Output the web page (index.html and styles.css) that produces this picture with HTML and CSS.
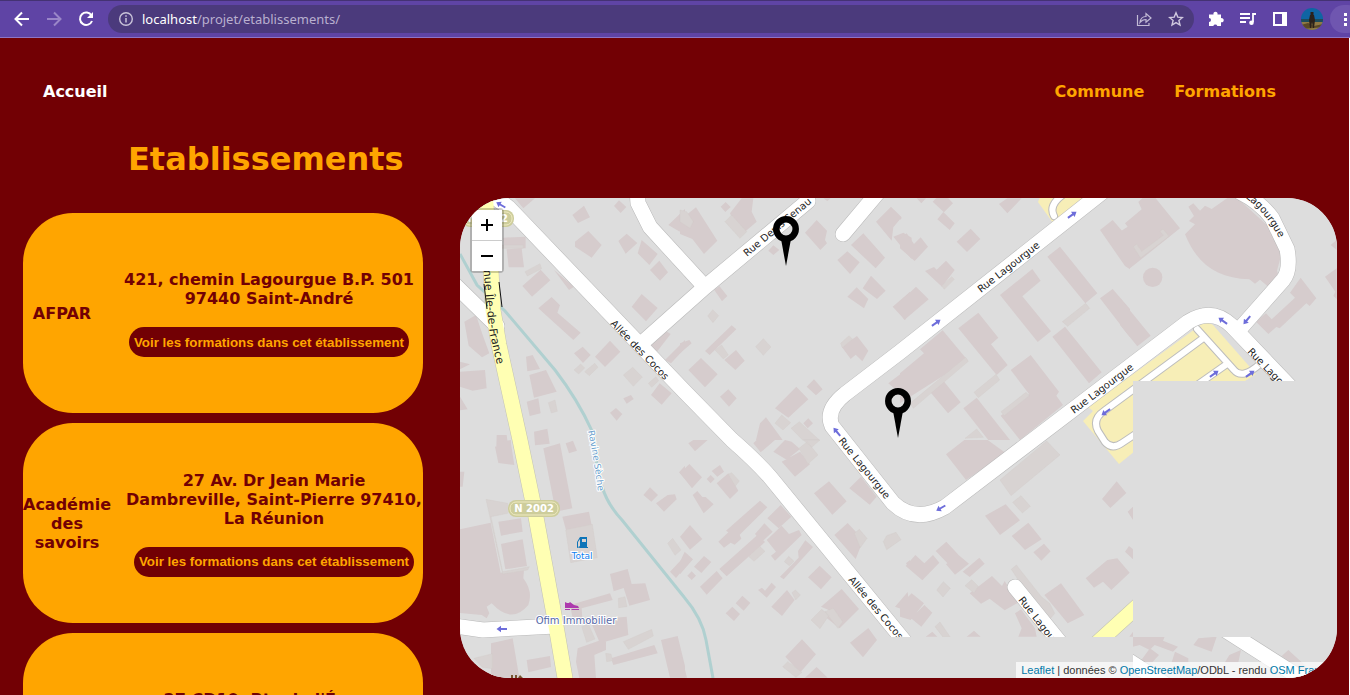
FILE: index.html
```html
<!DOCTYPE html>
<html lang="fr">
<head>
<meta charset="utf-8">
<title>Etablissements</title>
<link rel="stylesheet" href="styles.css">
</head>
<body>
<div class="toolbar">
  <button class="tool" aria-label="Précédent"><svg width="18" height="18" viewBox="0 0 18 18"><path d="M16 9H3M9 2.500 2.500 9 9 15.500" fill="none" stroke="#fff" stroke-width="2"/></svg></button>
  <button class="tool" aria-label="Suivant"><svg width="18" height="18" viewBox="0 0 18 18"><path d="M2 9h13M9 2.500 15.500 9 9 15.500" fill="none" stroke="#9a86c8" stroke-width="2"/></svg></button>
  <button class="tool" aria-label="Actualiser"><svg width="18" height="18" viewBox="0 0 18 18"><path d="M14.500 5.500A6.200 6.200 0 1 0 15 11" fill="none" stroke="#fff" stroke-width="2"/><path d="M16 2v6h-6z" fill="#fff"/></svg></button>
  <div class="address-bar">
    <svg width="16" height="16" viewBox="0 0 16 16"><circle cx="8" cy="8" r="6.300" fill="none" stroke="#c9c3d9" stroke-width="1.400"/><path d="M8 7v4.500M8 4.300v1.500" stroke="#c9c3d9" stroke-width="1.500"/></svg>
    <span class="url"><span class="host">localhost</span>/projet/etablissements/</span>
    <button class="tool" aria-label="Partager"><svg width="16" height="16" viewBox="0 0 16 16"><path d="M1.500 4v10.500H13V12M4 11.500C4.500 7.500 7 5.500 10 5.500V2.500L15 7l-5 4.300V8.500C7.500 8.500 5.500 9.500 4 11.500z" fill="none" stroke="#c3bbd6" stroke-width="1.200"/></svg></button>
    <button class="tool" aria-label="Favori"><svg width="16" height="16" viewBox="0 0 16 16"><path d="m8 1.800 1.800 4.300 4.600.4-3.500 3 1.100 4.500L8 11.600 4 14l1.100-4.500-3.500-3 4.600-.4z" fill="none" stroke="#d0c9df" stroke-width="1.400"/></svg></button>
  </div>
  <button class="tool" aria-label="Extensions"><svg width="18" height="18" viewBox="0 0 18 18"><path d="M2 4.500h4.500a2.100 2.100 0 1 1 4 0H14V8.200a2.100 2.100 0 1 1 0 4V16h-3.700a2.100 2.100 0 0 0-4 0H2v-3.900a2 2 0 0 0 0-4z" fill="#fff"/></svg></button>
  <button class="tool" aria-label="Médias"><svg width="18" height="18" viewBox="0 0 18 18"><path d="M1 4h10M1 8h10M1 12h6M14 12V4h3" fill="none" stroke="#fff" stroke-width="1.800"/><circle cx="12.500" cy="12.800" r="2.300" fill="#fff"/></svg></button>
  <button class="tool" aria-label="Panneau latéral"><svg width="16" height="16" viewBox="0 0 16 16"><path d="M1 1h14v14H1zM3 3v10h7V3z" fill="#fff" fill-rule="evenodd"/></svg></button>
  <button class="tool" aria-label="Profil"><svg width="22" height="22" viewBox="0 0 22 22"><defs><clipPath id="avatar"><circle cx="11" cy="11" r="11"/></clipPath></defs><g clip-path="url(#avatar)"><path fill="#0f65a3" d="M0 0h22v22H0z"/><path fill="#1d4c5c" d="M0 11h22v3H0z"/><path fill="#8f7a45" d="M0 14h22v8H0z"/><path fill="#5a4827" d="M0 17l7-2 6 3 9-2v3l-9 1-13 1z"/><path fill="#2a211b" d="M9 7h4l1 5-1 8h-1l-1-6-1 6H9l-1-8zM9.500 4h3v3h-3z"/></g></svg></button>
  <button class="tool menu" aria-label="Menu"><svg width="6" height="16" viewBox="0 0 6 16"><path d="M1 2h3v3H1zM1 7h3v3H1zM1 12h3v3H1z" fill="#fff"/></svg></button>
</div>

<div class="page">
  <nav class="nav">
    <a class="home" href="#">Accueil</a>
    <a href="#">Commune</a>
    <a href="#">Formations</a>
  </nav>
  <h1>Etablissements</h1>
  <main class="content">
    <div class="list">
      <article class="card">
        <div class="name">AFPAR</div>
        <div class="details"><p>421, chemin Lagourgue B.P. 501 97440 Saint-André</p><button class="more">Voir les formations dans cet établissement</button></div>
      </article>
      <article class="card">
        <div class="name">Académie des savoirs</div>
        <div class="details"><p>27 Av. Dr Jean Marie Dambreville, Saint-Pierre 97410, La Réunion</p><button class="more">Voir les formations dans cet établissement</button></div>
      </article>
      <article class="card">
        <div class="name">Formation</div>
        <div class="details"><p>27 CD10, Rte de l'Éperon<br>La Réunion</p><button class="more">Voir les formations dans cet établissement</button></div>
      </article>
    </div>

    <div class="map">
      <svg class="tiles" viewBox="460 198 877 480" preserveAspectRatio="xMinYMin slice">
        <defs>
          <clipPath id="loaded"><path d="M460 198h877v183h-204v256h204v41h-204v-41H877v41H460z"/></clipPath>
          <path id="arrow" d="M-5-1H1v-2.200L5.500 0 1 3.200V1H-5z" fill="#6d6dda"/>
          <path id="avenue" d="M481 250 484 272 486 300 490 335 502 385"/>
          <path id="ravine" d="M588 431Q594 460 598 492"/>
          <path id="bend" d="M1228 184 1251 202Q1271 218 1288 256"/>
          <path id="streets" d="M494 197 508 207 685 392 732 440Q755 460 770 477L905 642M455 285 497 326M455 626 483 630 555 626M637 190 638 203 650 227 705 287M642 343 705 287 808 201M843 234 880 190M1105 190 900 352 845 394Q825 410 832 426L893 503Q915 524 945 507L1188 322Q1212 307 1232 326L1294 391M1238 331 1283 280Q1291 270 1287 249L1272 218Q1260 202 1240 192M1015 587 1062 645M1222 628 1310 684M1126 659 1180 694"/>
          <path id="alleys" d="M1054 216Q1048 205 1064 194M1197 329 1234 370Q1242 380 1260 364M1202 339 1104 411Q1092 419 1098 431L1105 442Q1112 450 1122 443L1140 431M1227 364 1190 390"/>
          <g id="pin"><circle r="9.700" fill="none" stroke="#000" stroke-width="6.500"/><path d="M-5 10H5L0 37z"/></g>
        </defs>
        <path fill="#ddd" d="M460 198h2000v2000H460z"/>
        <g clip-path="url(#loaded)">
          <g class="building" transform="translate(455 190) scale(.333333)">
            <path d="M180 25h60l-35 30zM352 75l35-28 18 35-36 17zM360 155l40-32 40 42-30 38-50-33zM490 153l25-22 32 28-35 32zM560 150l48 42-25 33-35-35zM585 240l28-28 26 35-24 25zM640 105l50-48v72l-18-5zM477 48l15-17 22 20-17 18zM145 143l67-3v35h-64zM155 178l45-3 7 57h-46zM202 288l55-49 29 32-55 49zM250 355l40-34 25 25-8 22 70 60-22 22zM297 240l60 50-15 10zM530 350l30-38 48 42-35 40zM582 470l45-50 20 12-40 52zM630 510l60-60v25l-42 45zM420 500l45-48 31 33-46 46zM357 490l26-20 24 25-23 24zM588 615l26-35 36 30-30 34zM505 625l23-10 8 12-21 14zM465 668l18-14 19 18-17 20zM28 395l35-20 20 60 20 55-22 12-40-35zM15 515l30 8-30 15zM15 545l75-5 5 55-42 7-38-12zM213 500l20-5 22 42-38 7zM223 555l50-15 32 65-68 18zM215 635l35-10 7 45-33 8zM15 620l23 38-23 3zM125 735h30l5 40-36-5zM237 725l40-9 7 45-44 5z"/>
          </g>
          <g class="annex" transform="translate(455 190) scale(.333333)"><path d="M210 245l45-24 5 15-43 22zM505 555l28-23 29 29-27 28zM580 580l23-20 8 12-21 20zM357 540l20-18 12 12-18 18zM389 545l30-25 10 12-26 25zM280 638l20-8 7 34-18 5zM140 165h65v10h-65z"/></g>
          <g class="building" transform="translate(680 190) scale(.333333)">
            <path d="M150 70l35-45h35l-5 40 15 30-50 43zM122 50l15-14 15 15-16 15zM0 90l48-38 32 50 32 50-40 40-35-45-37-15zM375 128l35-38 31 32-6 28 6 10-20 20zM472 210l30-26 37 33-29 35zM513 165l37-35 65 73-28 32zM588 95l45-45 32 32-25 30-5 40zM640 140l30-12 25 15v65zM548 295l25-38 44 45-26 25zM502 320l28-28 35 35-13 28zM638 350l52-45v62l-15 23zM485 470l46-32 34 44-18 32-20-20-15 13zM625 580l65-50v80h-30zM75 483l80-77 14 12-80 77zM133 510l35-30 26 32-28 28zM25 540l38-36 50 49-38 39zM103 300l15-12 24 30-16 16zM120 620l25-22 25 27-23 25zM285 655l64-65 36 38-60 55zM380 590l22-22 26 30-20 18zM0 460l28-10 7 10-35 30zM265 182l15-16 18 14-18 15zM240 700l18-18 50 68h-80zM370 700l15-15 14 15-16 15zM430 25h22l-10 8z"/></g>
          <g class="annex" transform="translate(680 190) scale(.333333)"><path d="M0 60l20 5 20 30-10 20-30-20zM135 95l20-20 45 50-20 20zM227 470l23-24 23 25-23 25zM83 378l15-19 18 18-17 21zM285 700l20-25 27 23-23 22zM333 715l25-20 60 55h-50zM105 480l20-15 20 30-15 12zM482 460l25-23 10 10-30 26z"/></g>
          <g class="building" transform="translate(900 190) scale(.333333)">
            <path d="M0 550l72-60-12-12 68-57 75 90L0 640zM175 415l60-47 60 75-22 20 50 62-33 30zM300 315l97-78 25 35-55 47 86 105-40 32zM442 200l38-30 112 140-36 30zM457 440l38-30 110 137-38 33zM332 540l60-45 85 110-8 12 20 28-129 105-58-73 85-65zM190 655l40-32 100 127h-65zM90 605l40-33 52 65-38 33zM170 155l42-39 29 31-40 39zM112 88l18-22 34 34-15 20zM98 35l15-15 32 5 14 15-27 27zM297 42l25-17h43l-43 45zM0 335l48-45 38 38-73 62-13-20zM75 243l27-12 8 8 28-27 26 28-38 50zM0 145l20-15 22 32 20-20 22 28-40 43-44-38zM50 25h28l-14 15zM0 80l5 5-5 5zM600 120l38-30 32 37 20-17v128l-15-10zM600 325l38-28 52 60v85z"/></g>
          <g class="annex" transform="translate(900 190) scale(.333333)"><path d="M487 395l70-55 12 15-66 54zM222 607l66-54 11 17-64 53zM303 665l75-58 10 10-75 60zM195 745l35-28 20 25zM30 640l167-138 8 12L40 655zM125 288l30-28 8 8-30 30z"/></g>
          <g class="building" transform="translate(1120 190) scale(.333333)">
            <path d="M0 125l23-15-8-10 50-42-10-22 12-11h40l73 90L30 235 0 195zM205 50l15-10 20 22 15-15 20 10 50-35h25l125 115 8 60-12 45 10 30-28 25-33-28-15 12-17-13C290 265 230 220 195 133l30-30-18-10 15-15zM408 395l30-25 17 18 70-65-15-15 32-45 47 62-20 23-10-8-80 75-10-4-24 21zM632 165l18-15v30zM615 260l35-25v92l-10-10 6-12zM0 325l92 112-40 32L0 405z"/><circle cx="98" cy="262" r="29"/></g>
          <g class="annex" transform="translate(1120 190) scale(.333333)"><path d="M40 170l10-8 15 22 65-48-10-12 9-7 18 22-85 65z"/></g>
          <g class="building" transform="translate(455 440) scale(.333333)">
            <path d="M15 268l92-20 30 150 70-8-2 25q30 40 15 80-50 60-110-5l-15 10 8 20-8 15-15-10-65-6zM120 20l48-10 10 65-48-6zM128 5l40-5v10l-40 10zM130 245l68-10 5 40-65 12zM138 312l65-14 13 80-65 10zM265 25l50-15 37 195-50 10zM322 230l80-15 8 40-77 15zM332 10l22-8 12 30-24 8zM465 402l53-15 12 45 41-2 14 50-62 17-17-53-30 10zM345 495l120-35 8 20-93 25 2 30-30-5zM405 540l110-10 5 55-85 25zM368 625l85-30v35l-35 15 5 70h-50l-10-50zM468 655l130-40 10 25-133 35zM618 600l50-12 22 90v35h-45zM108 610l65-15 20 118h-85zM215 660l70-12 3 33-68 16zM565 165l20-23 24 23-20 20zM603 190l35-25 22-2 5 15-38 37zM672 97l18-20v40zM645 395l45-48v35l-27 32zM15 95h13l-5 45h-8zM240 0h35l-30 12z"/></g>
          <g class="annex" transform="translate(455 440) scale(.333333)"><path d="M93 178l65 12v30l-50 10 35 165 80-15-5 10-75 12zM332 270l80-17 15 100-80 15zM57 655l55-14v45l-30-4zM490 475l20-5 6 30-25 3zM380 560l20-8 20 45-25 10zM505 605l85-37 5 20-75 40zM452 640l16 2 5 20-18 3zM638 310l15-15 25 35-18 16z"/></g>
          <g class="building" transform="translate(680 440) scale(.333333)">
            <path d="M0 100l28-28 38 40-30 33zM95 93l25-18 12 20-20 15zM80 117l12-12 12 12-12 13zM110 130l35-30 30 52-25 25zM38 165l14-12 15 18h10l24 22-30 27zM115 305l30-28-7-5 102-90 22 20-83 82 5 12-20 18-12-6-20 15zM0 290l30-35 37 42-37 32zM118 387l115-103 22 22-115 103zM225 282l28-32 25 25-32 30zM260 300l45-43 22 25 30-12 8 15-80 77-12-15 15-12zM262 235l40-40 32 35-38 35zM300 410l56-57-2-20 22-32 23 20-88 97zM60 440l50-47 18 22-48 49zM0 365l14-30 25 23-39 45zM22 407l13-13 13 13-13 13zM42 380l30-32 22 18-30 33zM234 450l12-7 9 9 20-24 13 13-28 32zM274 500l47-50 23 30-38 48zM384 412l35-35 36 35-32 36zM423 500l62-53 52 60-58 58-40-32 14-20zM167 490l20-23 24 22-20 23zM137 520l20-20 23 22-18 21zM510 608l55-44 26 36-42 52zM316 650l50-52 42 45-48 55zM375 713l35-32 33 32zM0 630l21 83H0zM402 160l45-36 53 60-43 40zM463 285l40-36 47 50-23 58zM508 145l35-35 47 60-21 24zM645 500l38-44 7 60zM220 10l10-10h55l-43 37zM25 10L40 0h43L45 34zM280 35l35-35 20 5 25 22-40 32zM305 65l55-30 30 38-45 37zM678 370l12-10v28z"/></g>
          <g class="annex" transform="translate(680 440) scale(.333333)"><path d="M357 25l25-20 32 40-30 27zM370 0h50l-25 22zM207 350l32-31 16 15-33 30zM313 365l13-16 16 15-14 13zM393 540l32-32 22 18-27 40zM435 515l25-10 28 40-14 20zM610 305l10-18 28-10 15 22-43 30zM523 280l15-12 23 27-20 28zM308 680l15-15 43 32-18 15zM145 103l10-5 23 25-12 15zM336 458l10-8 15 15-14 15z"/></g>
          <g class="building" transform="translate(900 440) scale(.333333)">
            <path d="M138 43L193 0h70l55 40-120 80zM255 227l62-34 43 48-60 44zM335 288l50-40 40 50-50 32zM400 337l32-26 20 23-28 28zM17 378l29-33 27 25 26-25 19 23-51 53zM107 333l32-28 35 38-30 28zM138 373l35-30 34 28-42 33zM188 395l50-42 16 18-45 40zM209 460l67-52 30 30 8-15 40 65-40 23-45-35-26 15zM0 495l35-35 37 30-40 50-32-10zM33 535l40-40 24 23-33 42zM345 520l18-12 42 57 5 25h-55l10-25zM433 465l50-35 70 95-50 25zM557 415l65-55 30-5 37 43-55 52-25-25-27 18zM606 177l44-53 29 35-48 45zM675 335l12-17 12 10v30zM683 215l16-15v40zM77 590l20-15 15 15zM200 590l22-18 20 18zM688 590l11-15v15z"/></g>
          <g class="annex" transform="translate(900 440) scale(.333333)"><path d="M300 120L440 3l40 42-147 122zM338 187l25-20 28 32-24 20zM334 388l15-13 75 95 25 20 15 30-24 30zM110 450l20-25 21 20-22 26zM195 437l20-18 20 20-13 20zM105 560l15-14 30 44h-22z"/></g>
          <g class="building" transform="translate(1000 600) scale(.333333)">
            <path d="M399 110h95l-5 12 45 18-15 15-55-20-15 15-30-15-20 5zM450 145l27 20-20 22h-38zM595 115l55-5-15 45-55-20zM688 165l35-15-8 37h-40zM525 155l40 20v12h-50zM865 150l55 50-15 13-60-45z"/></g>
          <path class="river" d="M460 254 477 285 505 311 555 370Q578 400 592 431L597 465M602 486Q607 504 622 520L684 597Q702 618 706 640L713 678"/>
          <path class="parking" d="M1038 202l4-10h60l-49 31zM1083 421l10-10-5-4 118-86 7 4 43 49-11 7h-24L1119 464z"/>
          <use href="#alleys" class="alley-edge"/><use href="#alleys" class="alley"/>
          <use href="#streets" class="street-edge"/>
          <path class="avenue-edge" d="M485 192 491 270 493 310 499 345 520 440 536 517 555 620 566 684M1095 645 1140 604"/>
          <use href="#streets" class="street"/>
          <path class="avenue-fill" d="M485 192 491 270 493 310 499 345 520 440 536 517 555 620 566 684M1095 645 1140 604"/>
          <path d="M484 284 487 309M499 282 502 307" stroke="#111" fill="none"/>
          <use href="#arrow" transform="translate(1072 215) rotate(-35)"/>
          <use href="#arrow" transform="translate(936 323) rotate(-35)"/>
          <use href="#arrow" transform="translate(1106 412) rotate(145)"/>
          <use href="#arrow" transform="translate(941 508) rotate(150)"/>
          <use href="#arrow" transform="translate(837 432) rotate(230)"/>
          <use href="#arrow" transform="translate(1223 321) rotate(215)"/>
          <use href="#arrow" transform="translate(1247 320) rotate(130)"/>
          <use href="#arrow" transform="translate(1214 374) rotate(-35)"/>
          <use href="#arrow" transform="translate(1250 374) rotate(-35)"/>
          <use href="#arrow" transform="translate(501 205) rotate(210)"/>
          <use href="#arrow" transform="translate(502 629) rotate(180)"/>
          <g class="label">
            <text class="avenue-name"><textPath href="#avenue">Avenue Île-de-France</textPath></text>
            <text transform="translate(610 324) rotate(46)">Allée des Cocos</text>
            <text transform="translate(848 580) rotate(50)">Allée des Cocos</text>
            <text transform="translate(981 293) rotate(-38)">Rue Lagourgue</text>
            <text transform="translate(1074 414) rotate(-37)">Rue Lagourgue</text>
            <text transform="translate(838 441) rotate(51)">Rue Lagourgue</text>
            <text transform="translate(1247 352) rotate(46)">Rue Lagourgue</text>
            <text transform="translate(1018 600) rotate(52)">Rue Lagourgue</text>
            <text transform="translate(747 257) rotate(-40)">Rue Denis Senau</text>
            <text><textPath href="#bend">Rue Lagourgue</textPath></text>
          </g>
          <text class="water-label"><textPath href="#ravine">Ravine Sèche</textPath></text>
          <text class="place total" x="582" y="559">Total</text>
          <text class="place agency" x="576" y="624">Ofim Immobilier</text>
          <path fill="#0d74b8" fill-rule="evenodd" d="M580 537h7v10h1v1h-9v-1h1zm2 2v3h4v-3zM580 539l-2 3v5l2-1v1l-3 1v-6l3-5z"/>
          <path fill="#ad3aad" d="M565 602l2 1h2l1-1 4 3 4 1 1 2H565zM565 609h5v1h-5zM571 609h8v1h-7z"/>
          <path fill="#75542f" d="M511 675h2v3h-2zM515 675h2v3h-2zM520 675l3 3h-5z"/>
          <g class="shield"><rect x="508" y="500" width="52" height="17" rx="8"/><rect class="rim" x="510" y="502" width="48" height="13" rx="6"/><text x="534" y="512">N 2002</text></g>
          <g class="shield"><rect x="462" y="210" width="52" height="17" rx="8"/><rect class="rim" x="464" y="212" width="48" height="13" rx="6"/><text x="488" y="222">N 2002</text></g>
        </g>
        <use href="#pin" x="786" y="229"/>
        <use href="#pin" x="898" y="401"/>
      </svg>
      <div class="zoom"><button aria-label="Zoom avant"><svg width="14" height="14" viewBox="0 0 14 14"><path d="M1 7h12M7 1v12" stroke="#000" stroke-width="2"/></svg></button><button aria-label="Zoom arrière"><svg width="14" height="14" viewBox="0 0 14 14"><path d="M1 7h12" stroke="#000" stroke-width="2"/></svg></button></div>
      <div class="credits"><a href="#">Leaflet</a> | données © <a href="#">OpenStreetMap</a>/ODbL - rendu <a href="#">OSM France</a></div>
    </div>
  </main>
</div>
</body>
</html>
```
FILE: styles.css
```css
* { box-sizing: border-box; }
html { background: #fff; }
body {
  margin: 0;
  height: 100vh;
  overflow: hidden;
  display: flex;
  flex-direction: column;
  font-family: "DejaVu Sans", sans-serif;
}
button { border: 0; padding: 0; cursor: pointer; }
a { text-decoration: none; }

.toolbar {
  flex: none;
  display: flex;
  align-items: center;
  height: 38px;
  margin-right: -12px;
  padding-left: 6px;
  background: #5f44a5;
  border-top: 1px solid #443273;
  border-bottom: 1px solid #8e75c4;
}
.tool {
  flex: none;
  display: flex;
  align-items: center;
  justify-content: center;
  width: 32px;
  height: 28px;
  background: none;
}
.menu {
  margin-left: 2px;
  border-radius: 14px;
  background: #6f56b0;
}
.address-bar {
  flex: 1;
  display: flex;
  align-items: center;
  height: 28px;
  margin: 0 6px;
  padding: 0 2px 0 10px;
  border-radius: 14px;
  background: #4b3a7c;
}
.url {
  flex: 1;
  padding-left: 8px;
  font: 13px "Noto Sans", sans-serif;
  color: #b9b0cf;
}
.host { color: #fff; }

.page {
  flex: 1;
  min-height: 0;
  margin-right: 1px;
  overflow: hidden;
  background: #720004;
}
.nav {
  display: flex;
  gap: 30px;
  padding: 44px 73px 0 43px;
  font-size: 16px;
  font-weight: bold;
  line-height: 20px;
}
.nav a { color: #ffa500; }
.nav .home { margin-right: auto; color: #fff; }
h1 {
  margin: 38px 0 19px 128px;
  font-size: 32px;
  line-height: 39px;
  color: #ffa500;
}
.content {
  display: flex;
  align-items: flex-start;
  gap: 37px;
  padding: 0 12px 0 23px;
}
.list {
  flex: none;
  display: flex;
  flex-direction: column;
  gap: 10px;
  width: 400px;
  padding-top: 15px;
}
.card {
  display: grid;
  grid-template-columns: minmax(78px, min-content) 1fr;
  gap: 14px;
  align-items: center;
  height: 200px;
  padding-top: 1px;
  border-radius: 50px;
  background: #ffa500;
  color: #720004;
  font-size: 16px;
  font-weight: bold;
  line-height: 19px;
  text-align: center;
}
.details p { margin: 0 0 19px; }
.more {
  width: 280px;
  height: 30px;
  border-radius: 15px;
  background: #720004;
  color: #ffa500;
  font-family: "Liberation Sans", sans-serif;
  font-weight: bold;
}

.map {
  position: relative;
  flex: 1;
  height: 480px;
  border-radius: 50px;
  overflow: hidden;
  background: #ddd;
}
.tiles { display: block; width: 100%; height: 100%; }
.building { fill: #d6cccd; }
.annex { fill: #d8d3d2; stroke: #d2cac9; stroke-width: 1; }
.river { fill: none; stroke: #b0d0d0; stroke-width: 3; }
.parking { fill: #f7eeb7; }
.street-edge, .street, .alley-edge, .alley, .avenue-edge, .avenue-fill {
  fill: none;
  stroke-linecap: round;
  stroke-linejoin: round;
}
.street-edge { stroke: #b9b9b9; stroke-width: 16px; }
.street { stroke: #fff; stroke-width: 15px; }
.alley-edge { stroke: #bdbdbd; stroke-width: 8px; }
.alley { stroke: #fff; stroke-width: 6px; }
.avenue-edge { stroke: #c4c4b4; stroke-width: 16px; }
.avenue-fill { stroke: #ffffb3; stroke-width: 15px; }
.label { font-size: 10px; fill: #222; }
.avenue-name { font-size: 11px; }
.water-label { font-size: 9px; fill: #6b9fce; stroke: #fff; stroke-width: 2px; paint-order: stroke; }
.place { text-anchor: middle; stroke: #fff; stroke-width: 2px; paint-order: stroke; }
.total { font-size: 9px; fill: #0d7ef0; }
.agency { font-size: 10px; fill: #5668a8; }
.shield { fill: #cdcd9b; }
.shield .rim { fill: none; stroke: #efeac0; }
.shield text { fill: #fff; font-size: 10px; font-weight: bold; text-anchor: middle; }

.zoom {
  position: absolute;
  top: 10px;
  left: 10px;
  border: 2px solid rgba(0, 0, 0, .2);
  border-radius: 4px;
  background-clip: padding-box;
}
.zoom button {
  display: flex;
  align-items: center;
  justify-content: center;
  width: 30px;
  height: 30px;
  background: #fff;
}
.zoom button:first-child { height: 31px; border-bottom: 1px solid #ccc; }
.credits {
  position: absolute;
  right: 0;
  bottom: 0;
  padding: 0 5px;
  background: rgba(255, 255, 255, .7);
  color: #333;
  font: 11px/16px "Liberation Sans", sans-serif;
  white-space: nowrap;
}
.credits a { color: #0078a8; }
```
